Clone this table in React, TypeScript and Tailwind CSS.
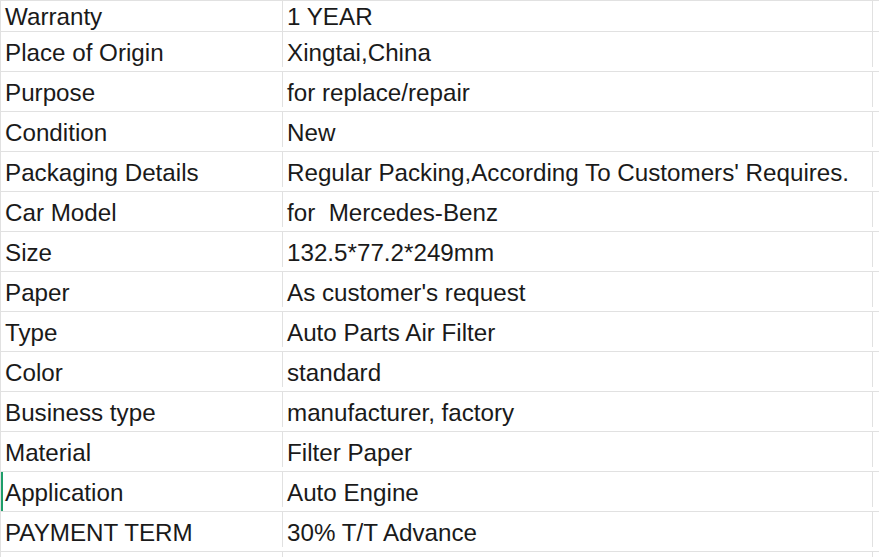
const rows: [string, string][] = [
  ["Warranty", "1 YEAR"],
  ["Place of Origin", "Xingtai,China"],
  ["Purpose", "for replace/repair"],
  ["Condition", "New"],
  ["Packaging Details", "Regular Packing,According To Customers' Requires."],
  ["Car Model", "for  Mercedes-Benz"],
  ["Size", "132.5*77.2*249mm"],
  ["Paper", "As customer's request"],
  ["Type", "Auto Parts Air Filter"],
  ["Color", "standard"],
  ["Business type", "manufacturer, factory"],
  ["Material", "Filter Paper"],
  ["Application", "Auto Engine"],
  ["PAYMENT TERM", "30% T/T Advance"],
  ["", ""],
];

export default function App() {
  return (
    <div
      className="w-[879px] h-[557px] overflow-hidden bg-white text-[#1a1a1a] border-t border-[#e1e1e1]"
      style={{ fontFamily: '"Liberation Sans", Arial, sans-serif' }}
    >
      {rows.map(([k, v], i) => (
        <div
          key={i}
          className={`flex items-stretch border-b border-l border-[#e1e1e1] text-[24.2px] leading-[28px] whitespace-pre ${
            i === 0 ? "h-[31px]" : "h-[40px] pb-[4px]"
          } ${k === "Application" ? "shadow-[inset_2px_0_0_#1e9e6a]" : ""}`}
        >
          <div className="w-[282px] shrink-0 border-r border-[#e1e1e1] flex items-end pl-[4px]">
            {k}
          </div>
          <div className="w-[590px] shrink-0 border-r border-[#e1e1e1] flex items-end pl-[4px]">
            {v}
          </div>
          <div className="flex-1" />
        </div>
      ))}
    </div>
  );
}
